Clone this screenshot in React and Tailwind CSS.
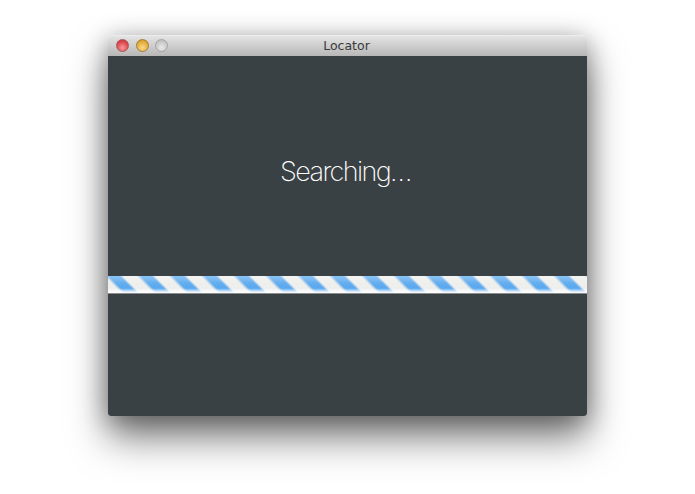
export default function App() {
  return (
    <div className="h-[494px] w-[695px] overflow-hidden bg-white pt-[35px] pl-[108px]">
      <div className="flex h-[381px] w-[479px] flex-col overflow-hidden rounded-t-[5px] rounded-b-[3px] shadow-[0_22px_38px_rgba(0,0,0,0.5),0_4px_24px_rgba(0,0,0,0.32)]">
        <header className="relative flex h-[21px] shrink-0 items-center justify-center border-t border-[#ececec] bg-gradient-to-b from-[#e4e4e4] to-[#b7b7b7]">
          <div className="absolute top-[3px] left-[8px] flex gap-[6.5px]">
            <span className="h-[13px] w-[13px] rounded-full border border-[#a8585a] bg-[radial-gradient(circle_at_50%_70%,#f79a9c,#dc4248_65%,#bb3036)]" />
            <span className="h-[13px] w-[13px] rounded-full border border-[#a67c30] bg-[radial-gradient(circle_at_50%_70%,#f8d98a,#e2aa38_65%,#c28a20)]" />
            <span className="h-[13px] w-[13px] rounded-full border border-[#a3a3a3] bg-[radial-gradient(circle_at_50%_70%,#e8e8e8,#c8c8c8_65%,#adadad)]" />
          </div>
          <span className="-ml-[2px] font-['DejaVu_Sans',sans-serif] text-[12.5px] leading-none text-[#3a3a3a]">Locator</span>
        </header>
        <main className="flex flex-1 flex-col bg-[#3a4144]">
          <h1 className="mt-[97px] pr-[4px] text-center font-['Inter',sans-serif] text-[27px] leading-[38px] font-extralight tracking-[-1.6px] text-white">
            Searching…
          </h1>
          <div className="mt-[85px] box-content h-[17px] border-b border-[#8c8c8c] bg-[linear-gradient(to_bottom,rgba(255,255,255,0.32)_0%,rgba(255,255,255,0.05)_45%,rgba(255,255,255,0)_72%,rgba(255,255,255,0.8)_92%,rgba(255,255,255,1)_100%),repeating-linear-gradient(45deg,#eeeeec_0px,#eeeeec_9.5px,#5aa8ee_12.5px,#5aa8ee_20px,#eeeeec_22.63px)]" />
        </main>
      </div>
    </div>
  );
}
